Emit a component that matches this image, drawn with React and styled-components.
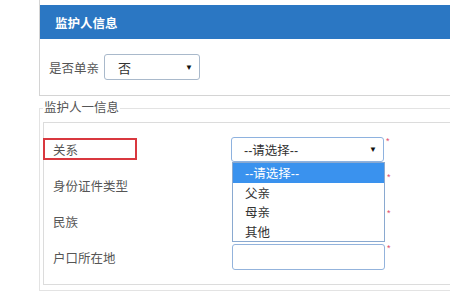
import styled, { createGlobalStyle } from 'styled-components';

const GlobalStyle = createGlobalStyle`
  html, body {
    margin: 0;
    padding: 0;
    background: #fff;
    overflow: hidden;
  }
  body {
    font-family: "Liberation Sans", "Noto Sans CJK SC", sans-serif;
    color: #555;
  }
`;

const Page = styled.div`
  box-sizing: border-box;
  width: 450px;
  padding-left: 39px;
`;

const Panel = styled.div`
  margin-top: -1px;
  padding-top: 5px;
  border: 1px solid #d4d4d4;
  border-right: none;
`;

const PanelHeader = styled.div`
  height: 34px;
  display: flex;
  align-items: center;
  padding-left: 15px;
  background: #2b77c3;
  color: #fff;
  font-size: 12.5px;
  font-weight: bold;
`;

const PanelBody = styled.div`
  height: 56px;
  display: flex;
  align-items: center;
  gap: 5px;
  padding-left: 9px;
  font-size: 12.5px;
`;

const SelectBox = styled.div`
  box-sizing: border-box;
  width: ${p => p.$width}px;
  height: ${p => p.$height}px;
  display: flex;
  align-items: center;
  justify-content: space-between;
  padding: 0 6px 0 ${p => p.$indent}px;
  border: 1px solid ${p => p.$border};
  border-radius: 3px;
  background: #fff;
  color: #333;
  font-size: ${p => p.$size}px;
`;

const Caret = styled.span`
  margin-left: auto;
  font-size: 8px;
  color: #111;
`;

const Fieldset = styled.fieldset`
  margin: 4px 0 0;
  padding: 6px 0 5px 3px;
  border: 1px solid #e3e3e3;
  border-right: none;
  min-width: 0;
`;

const Legend = styled.legend`
  padding: 0 1px;
  font-size: 12.5px;
  line-height: 16px;
  color: #555;
`;

const InnerBox = styled.div`
  position: relative;
  padding: 8px 0 9px;
  border: 1px solid #dcdcdc;
  border-right: none;
`;

const Row = styled.div`
  height: 36px;
  display: flex;
  align-items: center;
`;

const Label = styled.div`
  box-sizing: border-box;
  width: 188px;
  height: 22px;
  display: flex;
  align-items: center;
  padding-left: 9px;
  font-size: 12.5px;
  color: #555;
`;

const Mark = styled.div`
  box-sizing: border-box;
  width: 94px;
  height: 22px;
  margin-right: 94px;
  margin-left: -1px;
  display: flex;
  align-items: center;
  padding-left: 8px;
  border: 2px solid #d9383f;
  font-size: 12.5px;
  color: #555;
`;

const Field = styled.div`
  display: flex;
  align-items: flex-start;
`;

const Required = styled.span`
  margin-left: 2px;
  margin-top: -1px;
  font-size: 9px;
  color: #e0486a;
`;

const TextInput = styled.div`
  box-sizing: border-box;
  width: 153px;
  height: 26px;
  border: 1px solid #93b3dc;
  border-radius: 3px;
  background: #fff;
`;

const Dropdown = styled.ul`
  position: absolute;
  left: 188px;
  top: 39px;
  box-sizing: border-box;
  width: 153px;
  margin: 0;
  padding: 0;
  list-style: none;
  border: 1px solid #8aa9d0;
  background: #fff;
  z-index: 2;
`;

const Option = styled.li`
  height: 19.5px;
  display: flex;
  align-items: center;
  padding-left: 12px;
  font-size: 12.5px;
  color: ${p => (p.$active ? '#fff' : '#333')};
  background: ${p => (p.$active ? '#3a92ee' : '#fff')};
`;

// rows 2 and 3 sit under the open list, so their selects show no text
const rows = [
  { label: '关系', kind: 'select', mark: true, value: '--请选择--' },
  { label: '身份证件类型', kind: 'select', value: '' },
  { label: '民族', kind: 'select', value: '' },
  { label: '户口所在地', kind: 'input' },
];

const options = ['--请选择--', '父亲', '母亲', '其他'];

export default function App() {
  return (
    <Page>
      <GlobalStyle />
      <Panel>
        <PanelHeader>监护人信息</PanelHeader>
        <PanelBody>
          是否单亲
          <SelectBox $width={96} $height={26} $indent={13} $border="#a9b9cb" $size={13}>
            否
            <Caret>▼</Caret>
          </SelectBox>
        </PanelBody>
      </Panel>
      <Fieldset>
        <Legend>监护人一信息</Legend>
        <InnerBox>
          {rows.map(row => (
            <Row key={row.label}>
              {row.mark ? <Mark>{row.label}</Mark> : <Label>{row.label}</Label>}
              <Field>
                {row.kind === 'select' ? (
                  <SelectBox $width={153} $height={25} $indent={12} $border="#8eb2df" $size={12.5}>
                    {row.value}
                    {row.value && <Caret>▼</Caret>}
                  </SelectBox>
                ) : (
                  <TextInput />
                )}
                <Required>*</Required>
              </Field>
            </Row>
          ))}
          <Dropdown>
            {options.map((o, i) => (
              <Option key={o} $active={i === 0}>{o}</Option>
            ))}
          </Dropdown>
        </InnerBox>
      </Fieldset>
    </Page>
  );
}
